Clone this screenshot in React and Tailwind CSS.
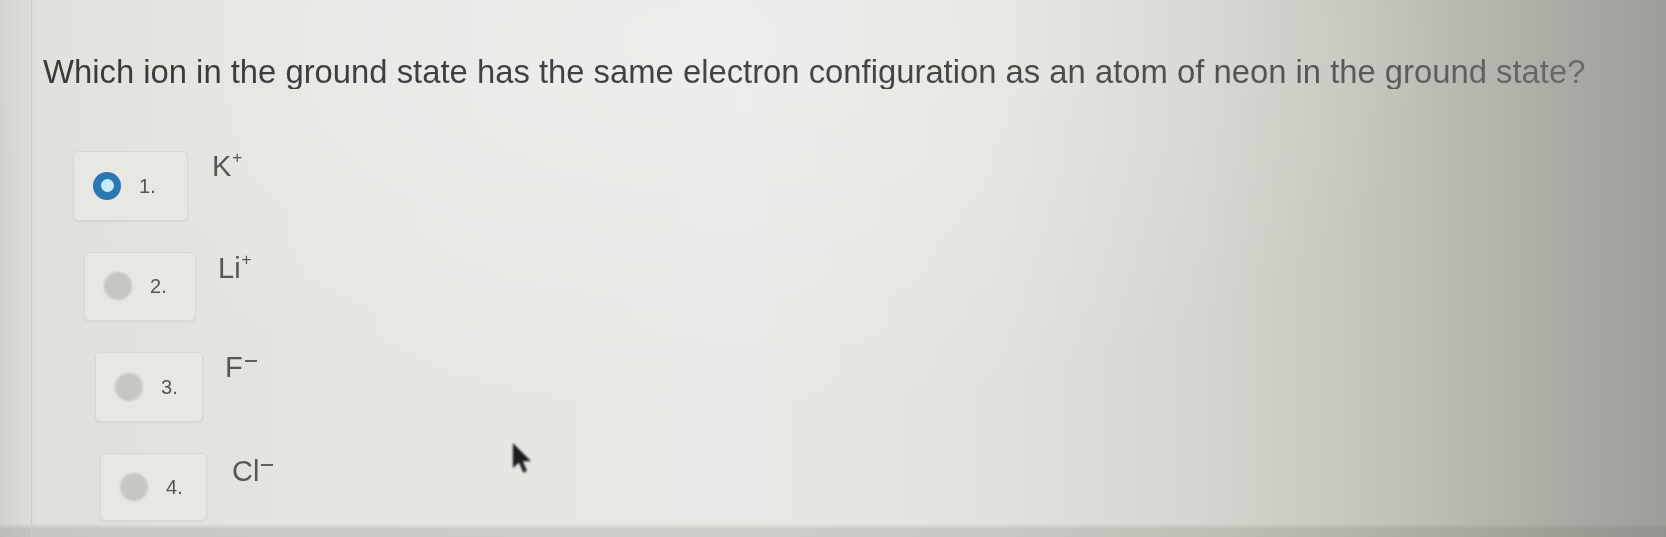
import React, { useState } from 'react';

const options = [
  { id: 1, label: 'K', charge: '+', indent: 'ml-[30px]', box: 'w-[115px] h-[70px]', gap: 'gap-[24px]', labelTop: 'mt-[1px]' },
  { id: 2, label: 'Li', charge: '+', indent: 'ml-[41px]', box: 'w-[112px] h-[69px]', gap: 'gap-[22px]', labelTop: 'mt-[2px]' },
  { id: 3, label: 'F', charge: '-', indent: 'ml-[52px]', box: 'w-[108px] h-[70px]', gap: 'gap-[22px]', labelTop: 'mt-[1px]' },
  { id: 4, label: 'Cl', charge: '-', indent: 'ml-[57px]', box: 'w-[107px] h-[68px]', gap: 'gap-[25px]', labelTop: 'mt-[4px]' },
];

const Radio = ({ checked }) =>
  checked ? (
    <span className="flex h-[28px] w-[28px] items-center justify-center rounded-full bg-[#2a77b3] blur-[0.6px]">
      <span className="h-[13px] w-[13px] rounded-full bg-[#c9ecf7]"></span>
    </span>
  ) : (
    <span className="h-[28px] w-[28px] rounded-full bg-[#c6c6c2] blur-[1px]"></span>
  );

const Charge = ({ sign }) =>
  sign === '+' ? (
    <span className="ml-[1px] inline-block align-top text-[17px] leading-none -mt-[3px]">+</span>
  ) : (
    <span className="ml-[2px] mt-[7px] inline-block h-[2px] w-[12px] align-top bg-[#5e5e5e]"></span>
  );

const Cursor = () => (
  <svg
    className="absolute left-[511px] top-[443px] h-[32px] w-[24px] blur-[1.2px]"
    viewBox="0 0 12 19"
  >
    <path d="M0 0 L0 15 L3.6 11.6 L6.2 17.6 L8.4 16.6 L5.9 10.8 L10.8 10.8 Z" fill="#1c1c1c" />
  </svg>
);

export default function App() {
  const [selected, setSelected] = useState(1);

  return (
    <div className="relative h-[537px] w-full overflow-hidden bg-[linear-gradient(to_bottom,transparent_97.5%,rgba(110,110,100,0.22)_98.5%),radial-gradient(ellipse_at_42%_8%,rgba(255,255,255,0.3),transparent_55%),linear-gradient(90deg,#d3d3ce_0%,#e0e0dc_2.5%,#e5e5e2_20%,#e7e7e5_45%,#e2e2dd_60%,#d6d6d0_72%,#c7c7bf_81%,#b6b6ae_89%,#a8a8a2_95%,#9d9d9b_100%)] font-['Liberation_Sans',Arial,sans-serif]">
      <div className="absolute left-[31px] top-0 h-full w-px bg-[#cfcfca]"></div>

      <div className="relative flex flex-col pl-[43px] pt-[56px]">
        <h1 className="bg-[linear-gradient(90deg,#3a3a3a,#454545_55%,#5c5c5c_85%,#727272_100%)] bg-clip-text text-[32.8px] font-normal leading-none text-transparent blur-[0.4px]">
          Which ion in the ground state has the same electron configuration as an atom of neon in the ground state?
        </h1>

        <div className="mt-[62px] flex flex-col gap-[31px]">
          {options.map((opt) => (
            <div key={opt.id} className={`flex items-start ${opt.indent} ${opt.gap}`}>
              <button
                type="button"
                onClick={() => setSelected(opt.id)}
                className={`flex ${opt.box} items-center gap-[18px] rounded-[5px] border border-[#d7d7d3] bg-[#e7e7e4] pl-[19px] shadow-[0_1px_2px_rgba(0,0,0,0.06)]`}
              >
                <Radio checked={selected === opt.id} />
                <span className="text-[20px] leading-none text-[#555] blur-[0.3px]">{opt.id}.</span>
              </button>
              <span className={`${opt.labelTop} text-[29px] leading-none text-[#565656] blur-[0.4px]`}>
                {opt.label}
                <Charge sign={opt.charge} />
              </span>
            </div>
          ))}
        </div>
      </div>

      <Cursor />
    </div>
  );
}
